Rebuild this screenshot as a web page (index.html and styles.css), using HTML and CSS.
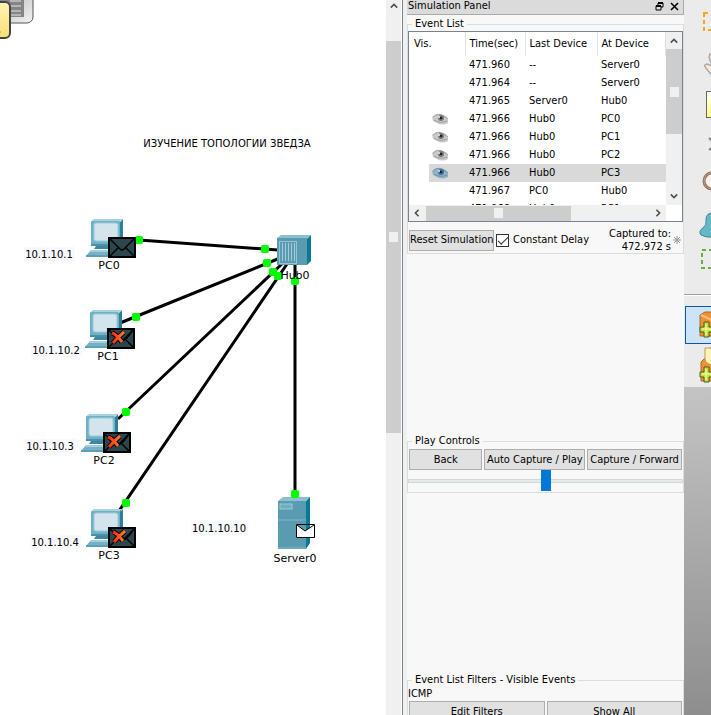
FILE: index.html
```html
<!DOCTYPE html>
<html lang="en">
<head>
<meta charset="utf-8">
<title>Simulation</title>
<link rel="stylesheet" href="styles.css">
</head>
<body>
<svg class="defs" aria-hidden="true">
  <defs>
    <linearGradient id="metal" x1="0" y1="0" x2="1" y2="1"><stop offset="0" stop-color="#a9a9a9"/><stop offset="1" stop-color="#f4f4f4"/></linearGradient>
    <linearGradient id="gold" x1="0" y1="0" x2="0" y2="1"><stop offset="0" stop-color="#fff3b4"/><stop offset="1" stop-color="#f7df76"/></linearGradient>
    <linearGradient id="fire" x1="0" y1="0" x2="1" y2="0"><stop offset="0" stop-color="#ff2a10"/><stop offset="1" stop-color="#ff7a2a"/></linearGradient>
    <linearGradient id="paper" x1="0" y1="0" x2="0" y2="1"><stop offset="0" stop-color="#fff"/><stop offset="1" stop-color="#ffff78"/></linearGradient>
    <symbol id="pc" viewBox="0 0 40 40" overflow="visible">
      <path d="M6 2 9 0H37L34 3V27L37 24V0" fill="#2f7f99"/>
      <path d="M6 2 9 0H37L34 2Z" fill="#a5d3e0"/>
      <rect x="5" y="2" width="29" height="25" rx="1" fill="#6fb1c6"/>
      <rect x="8" y="4" width="24" height="18" rx="2" fill="#d3e4ec" stroke="#9fcbd9"/>
      <path d="M5 25H34V27H5Z" fill="#4b90a8"/>
      <path d="M10 27H30L32 30H8Z" fill="#3f87a0"/>
      <path d="M5 31H34L31 37H0Z" fill="#75b2c7"/>
      <path d="M5 31H34L33 33H4Z" fill="#a3cfdd"/>
      <path d="M0 36H31V38H0Z" fill="#5f9fb6"/>
    </symbol>
    <symbol id="mail" viewBox="0 0 28 21">
      <path d="M1 1H27V20H1Z" fill="#2c464e" stroke="#000" stroke-width="2"/>
      <path d="M2 2 12 12Q14 14 16 12L26 2M2 19 10 11M26 19 18 11" fill="none" stroke="#000" stroke-width="1.4"/>
    </symbol>
    <symbol id="cross" viewBox="0 0 28 21">
      <path d="M14 13Q19 13 25 3" fill="none" stroke="#000" stroke-width="1.500"/>
      <path d="M5 5Q9 6 15 14M17 4Q10 10 6 15" fill="none" stroke="#000" stroke-width="5"/>
      <path d="M5 5Q9 6 15 14M17 4Q10 10 6 15" fill="none" stroke="url(#fire)" stroke-width="3"/>
    </symbol>
    <symbol id="eye" viewBox="0 0 17 12">
      <path d="M0 4Q5-1 11 2Q15 3 16 6V10Q10 13 5 10L1 8Z" fill="currentColor" opacity=".4"/>
      <path d="M1 4Q6-1 12 3L16 6M2 7Q8 11 15 8" fill="none" stroke="currentColor" stroke-width="1" opacity=".5"/>
      <circle cx="9" cy="5" r="3" fill="currentColor"/>
      <circle cx="9" cy="5" r="1.300" fill="#222"/>
      <circle cx="7" cy="4" r="1" fill="#eee"/>
    </symbol>
    <symbol id="up" viewBox="0 0 10 6"><path d="M1 5 5 1 9 5" fill="none" stroke="#505050" stroke-width="2"/></symbol>
    <symbol id="plus" viewBox="0 0 15 17"><path d="M5 1H10V6H14V11H10V16H5V11H1V6H5Z" fill="#c4e233" stroke="#4c5a28"/><path d="M7 3V14M3 8H12" stroke="#f6ffd0"/></symbol>
  </defs>
</svg>
<div class="app">
  <main class="workspace">
    <svg class="topology" role="img" aria-label="Star topology">
      <rect x="-10" y="-10" width="43" height="33" rx="6" fill="url(#metal)" stroke="#555"/>
      <path d="M0 0H24V17H0Z" fill="#858585"/>
      <path d="M10 1H21M10 6H21M10 11H21M10 15H21" stroke="#b5b5b5" stroke-width="2"/>
      <rect x="-10" y="2" width="20" height="36" rx="5" fill="url(#gold)" stroke="#444" stroke-width="2"/>
      <path d="M0 32H1" stroke="#999"/>

      <g class="links">
        <path d="M139 240 278 250M120 323 285 256M118 419 284 262M119 511 287 264M295 264V497"/>
      </g>

      <g>
        <path d="M277 238 281 235H311L307 239Z" fill="#8dc0cf"/>
        <path d="M307 239 311 235V261L307 265Z" fill="#087a94"/>
        <rect x="277" y="238" width="30" height="27" fill="#5b9bb1"/>
        <rect x="279.500" y="241.500" width="17" height="22" fill="none" stroke="#94c3d1"/>
        <path d="M282.500 243V261M285.500 243V261M288.500 243V261M291.500 243V261M294.500 243V261" stroke="#a2ccd9"/>
      </g>
      <g>
        <path d="M278 501 283 497H310L306 501Z" fill="#8dc0cf"/>
        <path d="M306 501 310 497V543L306 549Z" fill="#087a94"/>
        <rect x="278" y="501" width="28" height="48" fill="#5b9bb1"/>
        <path d="M278 520H306M278 548H306" stroke="#80b5c6"/>
        <rect x="280" y="504" width="12" height="5" fill="#6fadc0" stroke="#9acbd8"/>
      </g>
      <g class="ports">
        <rect x="135" y="236" width="8" height="8" rx="2"/><rect x="261" y="245" width="8" height="8" rx="2"/>
        <rect x="263" y="259" width="8" height="8" rx="2"/><rect x="269" y="268" width="8" height="8" rx="2"/>
        <rect x="274" y="272" width="8" height="8" rx="2"/><rect x="291" y="277" width="8" height="8" rx="2"/>
        <rect x="291" y="490" width="8" height="8" rx="2"/><rect x="132" y="313" width="8" height="8" rx="2"/>
        <rect x="122" y="408" width="8" height="8" rx="2"/><rect x="122" y="499" width="8" height="8" rx="2"/>
      </g>
      <path d="M296.500 524.500H314.500V537.500H296.500ZM297 525 305 531 314 525" fill="#fff" stroke="#000"/>

      <use href="#pc" x="86" y="219" width="40" height="40"/><use href="#mail" x="108" y="237" width="28" height="21"/>
      <use href="#pc" x="85" y="310" width="40" height="40"/><use href="#mail" x="107" y="328" width="28" height="21"/><use href="#cross" x="107" y="328" width="28" height="21"/>
      <use href="#pc" x="81" y="414" width="40" height="40"/><use href="#mail" x="103" y="432" width="28" height="21"/><use href="#cross" x="103" y="432" width="28" height="21"/>
      <use href="#pc" x="86" y="509" width="40" height="40"/><use href="#mail" x="108" y="527" width="28" height="21"/><use href="#cross" x="108" y="527" width="28" height="21"/>

      <g class="names">
        <text x="109" y="269">PC0</text><text x="108" y="360">PC1</text><text x="104" y="464">PC2</text>
        <text x="109" y="559">PC3</text><text x="295" y="279">Hub0</text><text x="295" y="562">Server0</text>
      </g>
      <g class="note-bg">
        <rect x="24" y="247" width="51" height="14"/><rect x="31" y="343" width="51" height="14"/><rect x="25" y="439" width="51" height="14"/>
        <rect x="30" y="535" width="51" height="14"/><rect x="191" y="521" width="57" height="14"/>
      </g>
      <g class="notes">
        <text x="227" y="147">ИЗУЧЕНИЕ ТОПОЛОГИИ ЗВЕДЗА</text>
        <text x="49" y="258">10.1.10.1</text><text x="56" y="354">10.1.10.2</text><text x="50" y="450">10.1.10.3</text>
        <text x="55" y="546">10.1.10.4</text><text x="219" y="532">10.1.10.10</text>
      </g>
    </svg>
  </main>
  <div class="page-scroll">
    <svg class="arrow"><use href="#up"/></svg>
    <div class="page-thumb"><i></i></div>
  </div>
  <aside class="panel">
    <header class="titlebar">
      <h1>Simulation Panel</h1>
      <button aria-label="Float"><svg width="9" height="9" viewBox="0 0 9 9"><path d="M3 3V1H8V5H6M1 4H6V8H1Z" fill="none" stroke="#000"/><path d="M3 1H8M1 4H6" stroke="#000" stroke-width="2"/></svg></button>
      <button aria-label="Close"><svg width="9" height="9" viewBox="0 0 9 9"><path d="M1 1 8 8M8 1 1 8" stroke="#000" stroke-width="1.600"/></svg></button>
    </header>
    <div class="groups">
      <fieldset>
        <legend>Event List</legend>
        <div class="events">
          <div class="rows">
            <table>
              <colgroup><col class="c-pad"><col class="c-vis"><col class="c-time"><col class="c-last"><col></colgroup>
              <thead><tr><th colspan="2">Vis.</th><th>Time(sec)</th><th>Last Device</th><th>At Device</th></tr></thead>
              <tbody>
                <tr><td></td><td></td><td>471.960</td><td>--</td><td>Server0</td></tr>
                <tr><td></td><td></td><td>471.964</td><td>--</td><td>Server0</td></tr>
                <tr><td></td><td></td><td>471.965</td><td>Server0</td><td>Hub0</td></tr>
                <tr><td></td><td><svg class="eye"><use href="#eye"/></svg></td><td>471.966</td><td>Hub0</td><td>PC0</td></tr>
                <tr><td></td><td><svg class="eye"><use href="#eye"/></svg></td><td>471.966</td><td>Hub0</td><td>PC1</td></tr>
                <tr><td></td><td><svg class="eye"><use href="#eye"/></svg></td><td>471.966</td><td>Hub0</td><td>PC2</td></tr>
                <tr class="selected"><td></td><td><svg class="eye"><use href="#eye"/></svg></td><td>471.966</td><td>Hub0</td><td>PC3</td></tr>
                <tr><td></td><td></td><td>471.967</td><td>PC0</td><td>Hub0</td></tr>
                <tr><td></td><td></td><td>471.968</td><td>Hub0</td><td>PC1</td></tr>
              </tbody>
            </table>
          </div>
          <div class="v-scroll"><svg class="arrow"><use href="#up"/></svg><div class="v-thumb"><i></i></div><svg class="arrow down"><use href="#up"/></svg></div>
          <div class="h-scroll"><svg class="arrow left"><use href="#up"/></svg><div class="h-track"><div class="h-thumb"><i></i></div></div><svg class="arrow right"><use href="#up"/></svg></div>
        </div>
        <div class="status">
          <button class="btn">Reset Simulation</button>
          <input type="checkbox" id="delay" checked><label for="delay">Constant Delay</label>
          <p>Captured to:<br>472.972 s</p>
          <svg class="spark" viewBox="0 0 8 8"><path d="M4 0V8M0 4H8M1 1 7 7M7 1 1 7" stroke="#999"/></svg>
        </div>
      </fieldset>
      <fieldset>
        <legend>Play Controls</legend>
        <div class="play">
          <button class="btn back">Back</button><button class="btn auto">Auto Capture / Play</button><button class="btn forward">Capture / Forward</button>
        </div>
        <input type="range" aria-label="Playback speed" min="0" max="100" value="50">
      </fieldset>
      <fieldset>
        <legend>Event List Filters - Visible Events</legend>
        <p class="filters">ICMP</p>
        <div class="play"><button class="btn half">Edit Filters</button><button class="btn half">Show All</button></div>
      </fieldset>
    </div>
  </aside>
  <nav class="tools">
    <button class="t44" aria-label="Select"><svg><rect x="20" y="13" width="20" height="17" fill="none" stroke="#f7a51c" stroke-width="2" stroke-dasharray="4 3"/></svg></button>
    <button class="t40" aria-label="Move"><svg><path d="M30 13 26 10 25 13 28 22 23 20Q19 21 22 24L29 33" fill="#fbe9dc" stroke="#aaa" stroke-width="1.500"/></svg></button>
    <button class="t42" aria-label="Note"><svg><rect x="22.500" y="7.500" width="20" height="26" fill="url(#paper)" stroke="#666"/></svg></button>
    <button class="t36" aria-label="Delete"><svg><path d="M25 12 30 17M25 24 30 20" fill="none" stroke="#888" stroke-width="2"/></svg></button>
    <button class="t42" aria-label="Inspect"><svg><circle cx="28" cy="19" r="8" fill="#f3f3f3" stroke="#8b7468" stroke-width="3"/><circle cx="28" cy="19" r="8" fill="none" stroke="#d19c68"/></svg></button>
    <button class="t40" aria-label="Draw"><svg><path d="M30 9Q22 8 22 16Q23 21 19 24Q14 27 17 31Q22 34 30 33Z" fill="#63bac6" stroke="#3c8793"/></svg></button>
    <button class="t49" aria-label="Resize"><svg><rect x="18" y="6" width="24" height="18" fill="none" stroke="#6caa4c" stroke-width="2" stroke-dasharray="4 3"/></svg></button>
    <hr>
    <button class="pdu active" aria-label="Add simple PDU"><svg><path d="M14 8 19 5H30V29H14Z" fill="#ef9035" stroke="#a76a32"/><path d="M15 8 30 15" stroke="#ffc17e" stroke-width="2"/><use href="#plus" x="13" y="14" width="15" height="17"/></svg></button>
    <button class="pdu" aria-label="Add complex PDU"><svg><path d="M17 15 21 11H30V34H17Z" fill="#ef9035" stroke="#a76a32"/><path d="M21 1H30V18Q22 18 21 12Z" fill="#fff2b8" stroke="#b59c5c"/><use href="#plus" x="15" y="19" width="15" height="17"/></svg></button>
    <div class="backdrop"></div>
  </nav>
</div>
</body>
</html>
```
FILE: styles.css
```css
* { box-sizing: border-box; }
body { margin: 0; overflow: hidden; background: #fff; color: #000; font: 11px/14px "DejaVu Sans Condensed", "DejaVu Sans", sans-serif; }
.defs { position: absolute; width: 0; height: 0; }
svg { display: block; }
button { padding: 0; border: 0; background: none; color: inherit; font: inherit; white-space: nowrap; }
p, h1 { margin: 0; font: inherit; }

.app { display: flex; height: 100vh; }
.workspace { flex: 1; min-width: 0; }
.topology { width: 100%; height: 100%; }
.links { fill: none; stroke: #000; stroke-width: 3; }
.ports { fill: #0f0; }
.names, .notes { text-anchor: middle; font-family: "DejaVu Sans", sans-serif; }
.names { font-size: 11px; }
.notes { font-size: 10px; }
.note-bg { fill: #f8f8ff; }

.page-scroll { width: 15px; padding-top: 3px; background: #f0f0f0; display: flex; flex-direction: column; align-items: center; gap: 32px; }
.arrow { width: 8px; height: 6px; flex: none; }
.page-thumb { width: 100%; height: 55%; background: #cdcdcd; display: grid; place-items: center; }
i { width: 9px; height: 10px; background: #f0f0f0; }

.panel { width: 282px; flex: none; margin-left: 1px; border-left: 1px solid #7c828b; padding-left: 4px; background: #f0f0f0; display: flex; flex-direction: column; height: calc(100vh + 10px); }
.titlebar { display: flex; align-items: center; height: 15px; padding: 0 4px 2px 1px; gap: 6px; background: #dbdbdb; border: solid #aaa; border-width: 0 1px 1px 0; flex: none; }
.titlebar h1 { flex: 1; }
.groups { flex: 1; padding-top: 2px; background: #f8f8f8; display: flex; flex-direction: column; justify-content: space-between; }
fieldset { margin: 0; padding: 0; border: 1px solid #dcdcdc; min-width: 0; }
legend { margin-left: 4px; padding: 0 3px; }

.events { display: grid; grid-template-columns: 1fr 16px; grid-template-rows: 173px 16px; border: 1px solid #7c828b; background: #fff; }
.rows { overflow: hidden; padding-left: 1px; }
table { width: 100%; border-collapse: collapse; table-layout: fixed; }
.c-pad { width: 19px; }
.c-vis { width: 36px; }
.c-time { width: 60px; }
.c-last { width: 72px; }
th, td { padding: 0 0 0 4px; height: 18px; text-align: left; font-weight: normal; white-space: nowrap; }
th { height: 24px; border-right: 1px solid #e2e2e2; }
td:nth-child(2) { padding-left: 3px; }
.selected td:not(:first-child) { background: #d9d9d9; }
.eye { width: 17px; height: 12px; color: #777; }
.selected .eye { color: #35739f; }

.v-scroll { display: flex; flex-direction: column; align-items: center; padding: 6px 0; background: #f0f0f0; }
.v-thumb { width: 100%; height: 85px; margin: 5px 0 auto; background: #cdcdcd; display: grid; place-items: center; }
.down { transform: rotate(180deg); }
.left { transform: rotate(-90deg); }
.right { transform: rotate(90deg); }
.h-scroll { display: flex; align-items: center; padding: 0 4px; gap: 5px; background: #f0f0f0; }
.h-track { flex: 1; height: 15px; }
.h-thumb { width: 65%; height: 100%; background: #cdcdcd; display: grid; place-items: center; }

.status { display: flex; align-items: center; height: 31px; padding: 5px 1px 0; }
.btn { height: 21px; border: 1px solid #adadad; background: #e1e1e1; }
.status .btn { width: 85px; }
input[type="checkbox"] { appearance: none; width: 13px; height: 13px; margin: 0 4px 0 2px; border: 1px solid #333; background: #fff; }
input[type="checkbox"]::before { content: ""; display: block; width: 9px; height: 4px; margin: 2px 0 0 1px; border: solid #333; border-width: 0 0 1px 1px; transform: rotate(-45deg); }
.status p { flex: 1; text-align: right; line-height: 13px; white-space: nowrap; }
.spark { width: 8px; height: 8px; margin: 0 1px 0 2px; flex: none; }

.play { display: flex; gap: 2px; padding: 1px 1px 0; }
.back { flex: 73; }
.auto { flex: 101; }
.forward { flex: 95; }
.half { flex: 1; }
input[type="range"] { appearance: none; display: block; width: 100%; height: 22px; margin: 0; background: none; }
input[type="range"]::-webkit-slider-runnable-track { height: 4px; border: 1px solid #d6d6d6; background: #e7eaea; }
input[type="range"]::-webkit-slider-thumb { appearance: none; width: 10px; height: 21px; margin-top: -10px; background: #0078d7; }
.filters { height: 13px; }
.groups fieldset:last-child .btn { height: 22px; }
.groups fieldset:last-child { height: 52px; }

.tools { width: 27px; flex: none; overflow: hidden; background: #ebebeb; display: flex; flex-direction: column; }
.tools button { width: 100%; flex: none; overflow: hidden; }
.tools svg { width: 27px; height: 100%; }
.t36 { height: 36px; }
.t40 { height: 40px; }
.t42 { height: 42px; }
.t44 { height: 44px; }
.t49 { height: 49px; }
hr { width: 100%; margin: 1px 0 10px; border: 0; border-top: 1px solid #a0a0a0; border-bottom: 1px solid #fff; }
.pdu { height: 40px; }
.tools .active { height: 38px; border: solid #0a58a6; border-width: 1px 0 1px 1px; margin-left: 1px; background: #cce4f7; margin-bottom: 3px; }
.backdrop { flex: 1; background: linear-gradient(#c4c4c4, #8e8e8e); }
```
